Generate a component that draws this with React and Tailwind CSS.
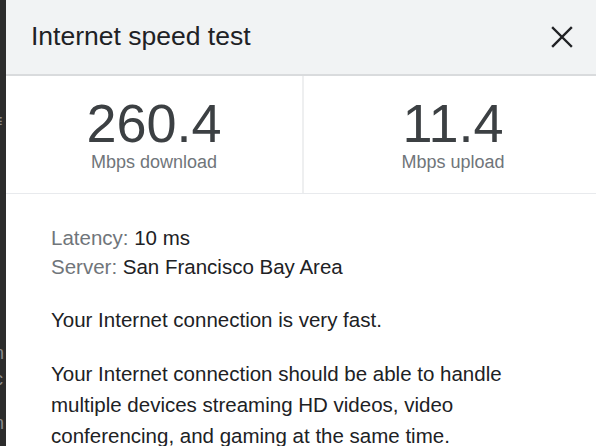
import React from 'react'

const stats = [
  { value: '260.4', label: 'Mbps download' },
  { value: '11.4', label: 'Mbps upload' },
]

function CloseIcon() {
  return (
    <svg width="22" height="22" viewBox="0 0 22 22" fill="none" stroke="#202124" strokeWidth="2.4" strokeLinecap="square">
      <path d="M2 2 L20 20 M20 2 L2 20" />
    </svg>
  )
}

export default function App() {
  return (
    <div className="w-[596px] h-[446px] overflow-hidden flex bg-white" style={{ fontFamily: '"Liberation Sans", Arial, sans-serif' }}>
      {/* bit of the page behind the dialog */}
      <div className="w-[6px] shrink-0 bg-[#2c2c2c] overflow-hidden flex flex-col text-[#8a8a8a] text-[18px] leading-none">
        <div className="h-[112px]" />
        <div className="-ml-[8px]">≡</div>
        <div className="h-[214px]" />
        <div className="-ml-[6px]">n</div>
        <div className="h-[8px]" />
        <div className="-ml-[6px]">c</div>
        <div className="h-[26px]" />
        <div className="-ml-[6px]">n</div>
      </div>

      <div className="w-[596px] shrink-0 flex flex-col">
        <div className="h-[76px] shrink-0 bg-[#f1f3f4] border-b-2 border-[#d9dbdd] flex items-center justify-between pl-[25px] pr-[29px]">
          <h1 className="text-[26.5px] text-[#202124] leading-none -mt-[1px]">Internet speed test</h1>
          <CloseIcon />
        </div>

        <div className="grid grid-cols-2 border-b border-[#e8eaed]">
          {stats.map((s, i) => (
            <div
              key={s.label}
              className={`flex flex-col items-center pt-[20px] pb-[22px] ${i === 0 ? 'border-r-2 border-[#eeeff0]' : ''}`}
            >
              <div className="text-[54px] leading-none text-[#3c4043]">{s.value}</div>
              <div className="mt-[3px] text-[18px] leading-none text-[#70757a]">{s.label}</div>
            </div>
          ))}
        </div>

        <div className="pl-[45px] pr-[40px] pt-[29px] text-[20.5px] text-[#202124]">
          <div className="leading-[29px]">
            <div>
              <span className="text-[#70757a]">Latency:</span> 10 ms
            </div>
            <div>
              <span className="text-[#70757a]">Server:</span> San Francisco Bay Area
            </div>
          </div>
          <p className="mt-[23px] leading-[31px]">Your Internet connection is very fast.</p>
          <p className="mt-[23px] leading-[31px]">
            Your Internet connection should be able to handle multiple devices streaming HD videos, video conferencing, and gaming at the same time.
          </p>
        </div>
      </div>
    </div>
  )
}
